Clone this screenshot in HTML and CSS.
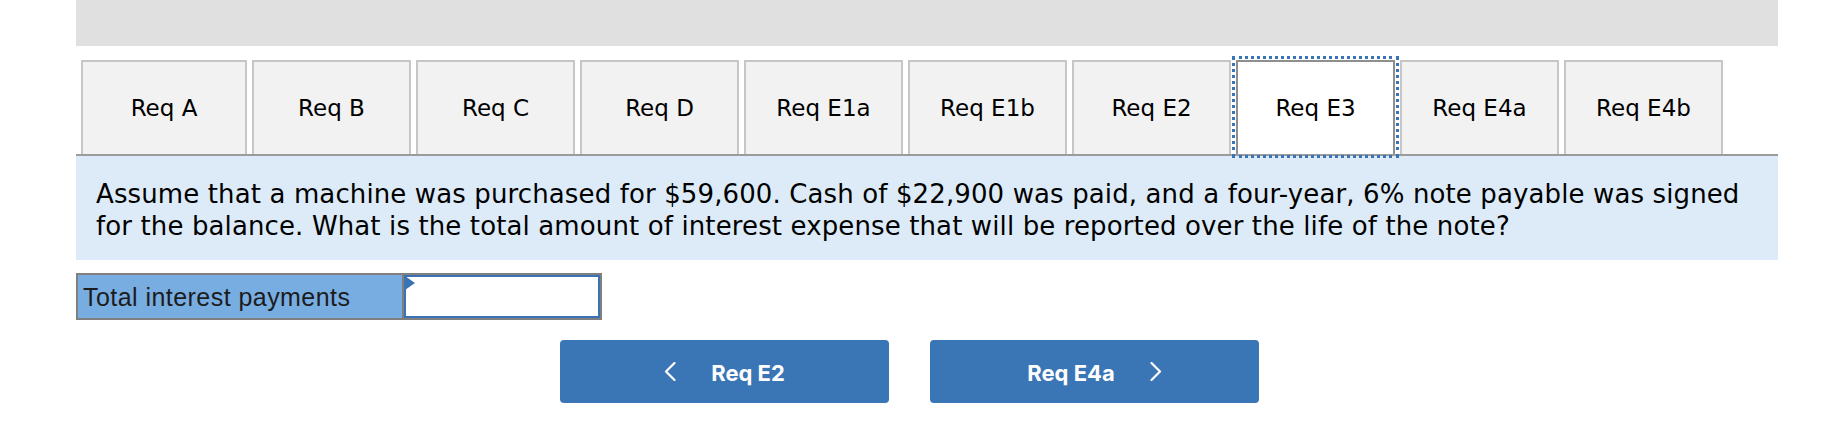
FILE: index.html
```html
<!DOCTYPE html>
<html lang="en">
<head>
<meta charset="utf-8">
<title>Req E3</title>
<link rel="stylesheet" href="styles.css">
</head>
<body>
<div class="page">
  <div class="topbar"></div>
  <div class="tabs">
    <button class="tab tab-first">Req A</button>
    <button class="tab">Req B</button>
    <button class="tab">Req C</button>
    <button class="tab">Req D</button>
    <button class="tab">Req E1a</button>
    <button class="tab">Req E1b</button>
    <button class="tab">Req E2</button>
    <button class="tab tab-active">Req E3</button>
    <button class="tab">Req E4a</button>
    <button class="tab">Req E4b</button>
  </div>
  <div class="question">Assume that a machine was purchased for $59,600. Cash of $22,900 was paid, and a four-year, 6% note payable was signed for the balance. What is the total amount of interest expense that will be reported over the life of the note?</div>
  <div class="answer">
    <div class="answer-label">Total interest payments</div>
    <div class="answer-cell"><div class="answer-input"></div></div>
  </div>
  <div class="nav">
    <button class="nav-btn">
      <svg class="chev" width="12" height="19" viewBox="0 0 12 19"><polyline points="10.5,1 2,9.5 10.5,18" fill="none" stroke="#fff" stroke-width="2.2" stroke-linecap="round" stroke-linejoin="round"/></svg>
      <span>Req E2</span>
    </button>
    <button class="nav-btn">
      <span>Req E4a</span>
      <svg class="chev" width="12" height="19" viewBox="0 0 12 19"><polyline points="1.5,1 10,9.5 1.5,18" fill="none" stroke="#fff" stroke-width="2.2" stroke-linecap="round" stroke-linejoin="round"/></svg>
    </button>
  </div>
</div>
</body>
</html>
```
FILE: styles.css
```css
html, body {
  margin: 0;
  padding: 0;
  background: #ffffff;
}

.page {
  width: 1702px;
  margin-left: 76px;
}

.topbar {
  height: 46px;
  background: #e0e0e0;
}

.tabs {
  display: flex;
  align-items: flex-end;
  padding-top: 14px;
  border-bottom: 2px solid #9b9b9b;
}

.tab {
  box-sizing: border-box;
  width: 159px;
  height: 94px;
  margin: 0 0 0 5px;
  padding: 0;
  background: #f2f2f2;
  border: 2px solid #c6c6c6;
  border-bottom: none;
  font-family: "DejaVu Sans", Verdana, sans-serif;
  font-size: 23px;
  color: #000;
  cursor: pointer;
}

.tab-first {
  width: 166px;
}

.tab-active {
  background: #ffffff;
  border-color: #8e8e8e;
  outline: 3px dotted #3a74b8;
  outline-offset: 1px;
}

.question {
  background: #dcebf7;
  padding: 22px 18px 18px 20px;
  font-family: "DejaVu Sans", Verdana, sans-serif;
  font-size: 26px;
  line-height: 32px;
  letter-spacing: 0.12px;
  color: #000;
}

.answer {
  display: flex;
  width: 526px;
  height: 47px;
  box-sizing: border-box;
  margin-top: 13px;
  border: 2px solid #7f7f7f;
}

.answer-label {
  width: 324px;
  box-sizing: border-box;
  padding-left: 5px;
  padding-top: 2px;
  background: #78ade2;
  display: flex;
  align-items: center;
  font-family: "Liberation Sans", Arial, sans-serif;
  font-size: 25px;
  letter-spacing: 0.45px;
  color: #1c1c1c;
}

.answer-cell {
  flex: 1;
  border-left: 2px solid #7f7f7f;
  display: flex;
}

.answer-input {
  flex: 1;
  position: relative;
  background: #fff;
  border: 2px solid #3a73b5;
}

.answer-input::before {
  content: "";
  position: absolute;
  left: -1px;
  top: -1px;
  border-left: 10px solid #3a73b5;
  border-top: 7px solid transparent;
  border-bottom: 7px solid transparent;
}

.nav {
  display: flex;
  gap: 41px;
  margin-top: 20px;
  padding-left: 484px;
}

.nav-btn {
  width: 329px;
  height: 63px;
  border: none;
  border-radius: 4px;
  background: #3a75b6;
  color: #fff;
  display: flex;
  align-items: center;
  justify-content: center;
  gap: 35px;
  font-family: Inter, Roboto, sans-serif;
  font-weight: 700;
  font-size: 22px;
  padding: 2px 0 0 0;
  cursor: pointer;
}

.chev {
  display: block;
  margin-top: -2px;
}
```
